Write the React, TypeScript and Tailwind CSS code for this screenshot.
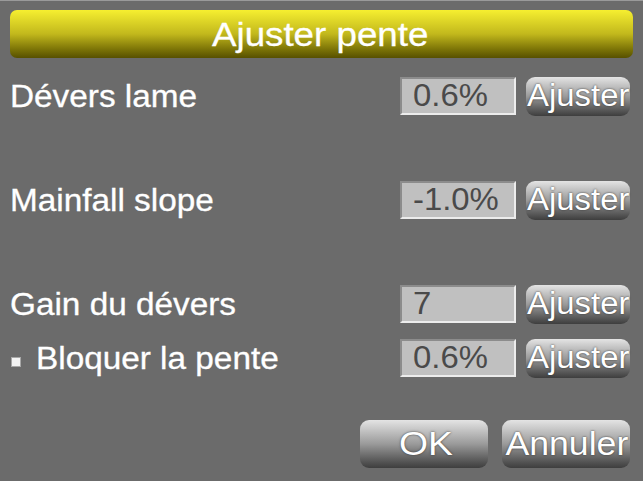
const rows = [
  { label: 'Dévers lame', value: '0.6%', gap: 'mt-[19px]' },
  { label: 'Mainfall slope', value: '-1.0%', gap: 'mt-[66px]' },
  { label: 'Gain du dévers', value: '7', gap: 'mt-[66px]' },
  { label: 'Bloquer la pente', value: '0.6%', gap: 'mt-[16px]', check: true },
];

function GrayButton({ children, className }: { children: React.ReactNode; className: string }) {
  return (
    <button
      className={`flex items-center justify-center rounded-[9px] bg-gradient-to-b from-[#e4e4e4] via-[#9a9a9a] to-[#3e3e3e] text-white [text-shadow:0_0_2px_#333] ${className}`}
    >
      {children}
    </button>
  );
}

export default function App() {
  return (
    <div
      className="flex h-[481px] w-[643px] flex-col border-t border-[#9a9a9a] bg-[#6b6b6b] px-[10px] pt-[9px]"
      style={{ fontFamily: "'Liberation Sans', Arial, sans-serif" }}
    >
      <div className="flex h-[48px] items-center justify-center rounded-[7px] bg-gradient-to-b from-[#f6ef30] via-[#c2b81c] to-[#575000] pr-[3px]">
        <span className="inline-block scale-x-[1.08] text-[34px] leading-none text-white [-webkit-text-stroke:0.3px_white]">
          Ajuster pente
        </span>
      </div>

      {rows.map((r) => (
        <div key={r.label} className={`flex h-[38px] items-center justify-between pr-[3px] ${r.gap}`}>
          <div className="flex items-center gap-[15px] pt-[3px] text-[31px] text-white [-webkit-text-stroke:0.3px_white]">
            {r.check && (
              <span className="ml-[1px] mt-[5px] h-[10px] w-[10px] border border-[#a8a8a8] bg-[#f4f4f4]" />
            )}
            <span className="inline-block origin-left scale-x-[1.075]">{r.label}</span>
          </div>
          <div className="flex items-center gap-[10px]">
            <div className="flex h-[38px] w-[116px] items-center border-2 border-t-[#8c8c8c] border-l-[#8c8c8c] border-b-[#ececec] border-r-[#ececec] bg-[#c0c0c0] pl-[11px] pt-[1px] text-[31px] text-[#4a4a4a]">
              <span className="inline-block origin-left scale-x-[1.06]">{r.value}</span>
            </div>
            <GrayButton className="h-[39px] w-[104px] pl-[1px] text-[31px]">
              <span className="inline-block scale-x-[1.06]">Ajuster</span>
            </GrayButton>
          </div>
        </div>
      ))}

      <div className="mt-[43px] flex justify-end gap-[14px] pr-[3px]">
        <GrayButton className="h-[48px] w-[128px] pl-[3px] text-[33px]">
          <span className="inline-block scale-x-[1.13]">OK</span>
        </GrayButton>
        <GrayButton className="h-[48px] w-[128px] pl-[1px] text-[33px]">
          <span className="inline-block scale-x-[1.08]">Annuler</span>
        </GrayButton>
      </div>
    </div>
  );
}
